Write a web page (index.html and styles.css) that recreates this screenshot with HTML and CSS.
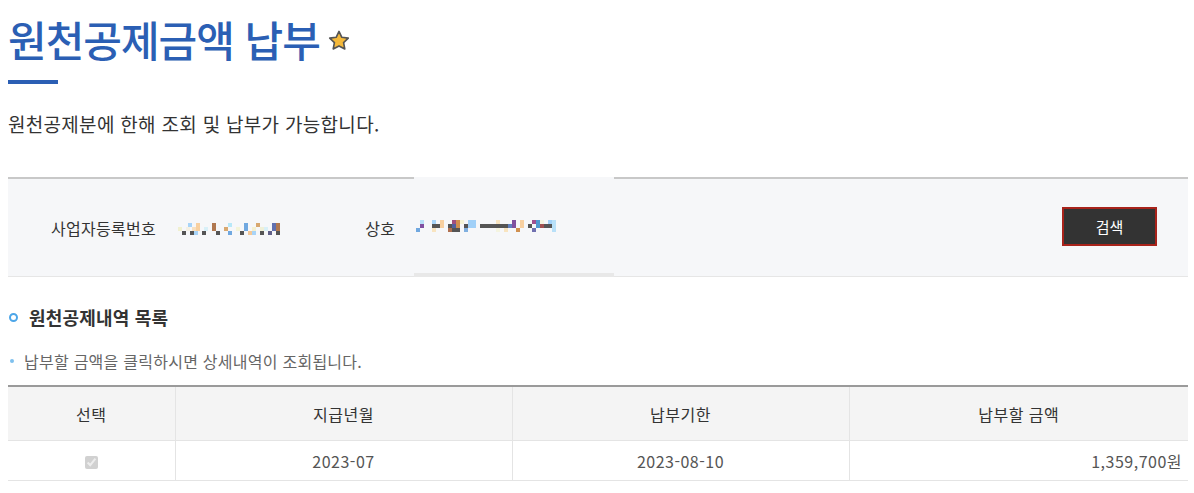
FILE: index.html
```html
<!DOCTYPE html>
<html lang="ko">
<head>
<meta charset="utf-8">
<title>원천공제금액 납부</title>
<link rel="stylesheet" href="styles.css">
</head>
<body>
<div class="page">
  <div class="title-wrap">
    <h1 class="title">원천공제금액 납부</h1>
    <svg class="star" width="24" height="24" viewBox="0 0 22 22"><path d="M11 2.2l2.6 5.4 5.9.8-4.3 4.1 1.1 5.8L11 15.5l-5.3 2.8 1.1-5.8-4.3-4.1 5.9-.8z" fill="#f5b93a" stroke="#555" stroke-width="1.5" stroke-linejoin="round"/></svg>
  </div>
  <div class="title-bar"></div>
  <p class="desc">원천공제분에 한해 조회 및 납부가 가능합니다.</p>

  <div class="search-box">
    <span class="label label-biz">사업자등록번호</span>
    <svg class="mosaic mosaic-biz" width="112" height="12" viewBox="0 0 112 12">
      <rect x="10" y="0" width="4" height="4" fill="#a8d4f8"/>
      <rect x="18" y="0" width="4" height="4" fill="#f8d0a0"/>
      <rect x="34" y="0" width="4" height="8" fill="#b07850"/>
      <rect x="50" y="0" width="4" height="4" fill="#b8e8f8"/>
      <rect x="66" y="0" width="4" height="8" fill="#70a8e0"/>
      <rect x="78" y="0" width="4" height="4" fill="#d8a870"/>
      <rect x="94" y="0" width="4" height="8" fill="#6070b0"/>
      <rect x="98" y="0" width="4" height="8" fill="#b07850"/>
      <rect x="0" y="4" width="4" height="4" fill="#f0f0d0"/>
      <rect x="8" y="4" width="4" height="4" fill="#f4f0e4"/>
      <rect x="14" y="4" width="4" height="4" fill="#f8e0c0"/>
      <rect x="18" y="4" width="4" height="4" fill="#f8d0a0"/>
      <rect x="26" y="4" width="4" height="4" fill="#d8f0f8"/>
      <rect x="46" y="4" width="4" height="4" fill="#d8a870"/>
      <rect x="58" y="4" width="4" height="4" fill="#f4f4d8"/>
      <rect x="74" y="4" width="4" height="4" fill="#f4f0d0"/>
      <rect x="82" y="4" width="4" height="4" fill="#f0f0d8"/>
      <rect x="86" y="4" width="4" height="4" fill="#d8f0f8"/>
      <rect x="4" y="8" width="4" height="4" fill="#555"/>
      <rect x="12" y="8" width="4" height="4" fill="#555"/>
      <rect x="16" y="8" width="4" height="4" fill="#a8d4f8"/>
      <rect x="24" y="8" width="4" height="4" fill="#555"/>
      <rect x="38" y="8" width="4" height="4" fill="#555"/>
      <rect x="50" y="8" width="4" height="4" fill="#70a8e0"/>
      <rect x="62" y="8" width="4" height="4" fill="#555"/>
      <rect x="70" y="8" width="4" height="4" fill="#f4c898"/>
      <rect x="74" y="8" width="4" height="4" fill="#a8d4f8"/>
      <rect x="82" y="8" width="4" height="4" fill="#555"/>
      <rect x="90" y="8" width="4" height="4" fill="#606088"/>
      <rect x="98" y="8" width="4" height="4" fill="#555"/>
    </svg>
    <span class="label label-name">상호</span>
    <div class="name-field">
      <svg class="mosaic" width="144" height="12" viewBox="0 0 144 12">
        <rect x="4" y="0" width="4" height="4" fill="#b8e0f8"/>
        <rect x="16" y="0" width="4" height="4" fill="#a8d4f8"/>
        <rect x="24" y="0" width="4" height="8" fill="#f8d0a0"/>
        <rect x="36" y="0" width="4" height="4" fill="#a05080"/>
        <rect x="40" y="0" width="4" height="8" fill="#d09050"/>
        <rect x="44" y="0" width="4" height="4" fill="#f4f4d8"/>
        <rect x="52" y="0" width="8" height="8" fill="#a0d0f8"/>
        <rect x="80" y="0" width="4" height="4" fill="#f8e4c0"/>
        <rect x="96" y="0" width="4" height="8" fill="#8050a0"/>
        <rect x="104" y="0" width="4" height="8" fill="#f8d0a0"/>
        <rect x="116" y="0" width="4" height="4" fill="#a05090"/>
        <rect x="120" y="0" width="4" height="8" fill="#5098d0"/>
        <rect x="124" y="0" width="4" height="4" fill="#f4f4e0"/>
        <rect x="132" y="0" width="4" height="4" fill="#a0d0f8"/>
        <rect x="136" y="0" width="4" height="12" fill="#b8e0f8"/>
        <rect x="4" y="4" width="4" height="4" fill="#8050a0"/>
        <rect x="16" y="4" width="8" height="4" fill="#555"/>
        <rect x="32" y="4" width="4" height="4" fill="#555"/>
        <rect x="36" y="4" width="4" height="4" fill="#5060a0"/>
        <rect x="48" y="4" width="4" height="4" fill="#555"/>
        <rect x="64" y="4" width="28" height="4" fill="#555"/>
        <rect x="92" y="4" width="4" height="4" fill="#6080c0"/>
        <rect x="112" y="4" width="4" height="4" fill="#555"/>
        <rect x="124" y="4" width="4" height="4" fill="#a05050"/>
        <rect x="128" y="4" width="8" height="4" fill="#555"/>
        <rect x="0" y="8" width="4" height="4" fill="#70a8e0"/>
        <rect x="16" y="8" width="4" height="4" fill="#f8e4c0"/>
        <rect x="32" y="8" width="4" height="4" fill="#b07050"/>
        <rect x="36" y="8" width="8" height="4" fill="#555"/>
        <rect x="48" y="8" width="4" height="4" fill="#80b0e0"/>
        <rect x="80" y="8" width="4" height="4" fill="#f4f4e0"/>
        <rect x="88" y="8" width="4" height="4" fill="#f8e4c0"/>
        <rect x="100" y="8" width="4" height="4" fill="#d09050"/>
        <rect x="116" y="8" width="4" height="4" fill="#7070b0"/>
      </svg>
    </div>
    <button class="search-btn" type="button">검색</button>
  </div>

  <h2 class="section-title"><span class="ring"></span>원천공제내역 목록</h2>
  <p class="note"><span class="dot"></span>납부할 금액을 클릭하시면 상세내역이 조회됩니다.</p>

  <table class="list">
    <colgroup>
      <col class="c1"><col class="c2"><col class="c3"><col class="c4">
    </colgroup>
    <thead>
      <tr><th>선택</th><th>지급년월</th><th>납부기한</th><th>납부할 금액</th></tr>
    </thead>
    <tbody>
      <tr>
        <td class="center"><input class="chk" type="checkbox" checked disabled></td>
        <td class="center">2023-07</td>
        <td class="center">2023-08-10</td>
        <td class="amount">1,359,700원</td>
      </tr>
    </tbody>
  </table>
</div>
</body>
</html>
```

FILE: styles.css
```css
html, body {
  margin: 0;
  padding: 0;
  background: #fff;
}
body {
  font-family: "Noto Sans CJK KR", "Noto Sans", sans-serif;
  color: #333;
}
.page {
  padding: 0 6px 0 8px;
}
.title-wrap {
  display: flex;
  align-items: center;
  gap: 7px;
  padding-top: 13px;
}
.title {
  margin: 0;
  font-size: 42px;
  font-weight: 500;
  line-height: 52px;
  color: #2b5fb4;
  letter-spacing: -1px;
}
.star {
  margin-top: 4px;
}
.title-bar {
  width: 50px;
  height: 4px;
  background: #2b5fb4;
  margin-top: 15px;
}
.desc {
  margin: 27px 0 0;
  font-size: 19px;
  line-height: 26px;
  color: #333;
  letter-spacing: 0.3px;
}
.search-box {
  margin-top: 40px;
  display: flex;
  align-items: stretch;
  height: 97px;
  background: #f6f7f9;
  border-top: 2px solid #c8c8c8;
  border-bottom: 1px solid #e6e6e6;
}
.label {
  align-self: center;
  font-size: 16px;
  color: #333;
  letter-spacing: 0.3px;
}
.label-biz {
  margin-left: 43px;
}
.mosaic {
  display: block;
}
.mosaic-biz {
  align-self: center;
  margin-left: 22px;
  margin-top: 2px;
}
.label-name {
  margin-left: 75px;
}
.name-field {
  width: 200px;
  margin-left: 19px;
  margin-top: -2px;
  margin-bottom: -1px;
  background: #f6f7f9;
  border-bottom: 4px solid #e8e8e8;
  display: flex;
  align-items: center;
  padding-left: 2px;
  box-sizing: border-box;
}
.name-field .mosaic {
  margin-top: 2px;
}
.search-btn {
  align-self: center;
  margin-left: auto;
  margin-right: 31px;
  width: 95px;
  height: 39px;
  background: #333;
  border: 2px solid #a8231b;
  color: #fff;
  font-family: "Noto Sans CJK KR", sans-serif;
  font-size: 15px;
  padding: 0;
  margin-top: -2px;
}
.section-title {
  display: flex;
  align-items: center;
  margin: 28px 0 0;
  font-size: 18px;
  font-weight: 700;
  line-height: 24px;
  color: #333;
  letter-spacing: 0.2px;
}
.ring {
  width: 5px;
  height: 5px;
  border: 2px solid #4da6e8;
  border-radius: 50%;
  margin-left: 1px;
  margin-right: 11px;
}
.note {
  display: flex;
  align-items: center;
  margin: 21px 0 0;
  font-size: 16px;
  line-height: 22px;
  color: #666;
  letter-spacing: 0.25px;
}
.dot {
  width: 4px;
  height: 4px;
  border-radius: 50%;
  background: #7ec0ee;
  margin-left: 2px;
  margin-right: 10px;
}
.list {
  width: 100%;
  margin-top: 13px;
  border-collapse: collapse;
  table-layout: fixed;
  border-top: 2px solid #9a9a9a;
  font-size: 16px;
  letter-spacing: 0.5px;
}
.c1 { width: 167px; }
.c2 { width: 337px; }
.c3 { width: 337px; }
.list th {
  background: #f4f4f4;
  height: 53px;
  font-weight: 400;
  color: #333;
  border-bottom: 1px solid #e4e4e4;
  border-left: 1px solid #e4e4e4;
  padding: 0;
}
.list th:first-child,
.list td:first-child {
  border-left: none;
}
.list td {
  height: 39px;
  color: #555;
  border-bottom: 1px solid #e4e4e4;
  border-left: 1px solid #e4e4e4;
  padding: 0;
}
.center {
  text-align: center;
}
.amount {
  text-align: right;
  padding-right: 6px !important;
}
.chk {
  width: 13px;
  height: 13px;
  margin: 0;
  vertical-align: -6px;
  position: relative;
  top: -4px;
}
```
